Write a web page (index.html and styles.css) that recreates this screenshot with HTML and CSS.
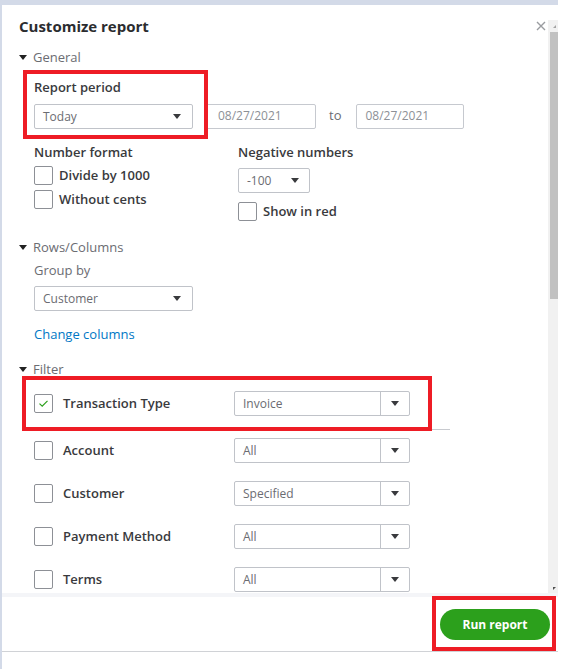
FILE: index.html
```html
<!DOCTYPE html>
<html>
<head>
<meta charset="utf-8">
<link rel="stylesheet" href="styles.css">
</head>
<body>
<div class="screen">
  <div class="dialog">
    <div class="body">
      <div class="content">
        <div class="title-row">
          <h1 class="title">Customize report</h1>
          <svg class="close" width="10" height="10" viewBox="0 0 10 10"><path d="M1 1L9 9M9 1L1 9" stroke="#9a9ca0" stroke-width="1.4"/></svg>
        </div>

        <div class="section-head"><span class="caret"></span>General</div>
        <div class="section">
          <div class="period-row">
            <div class="hl hl-period">
              <div class="label strong">Report period</div>
              <div class="select w159"><span class="val">Today</span><span class="arrow"></span></div>
            </div>
            <div class="date first-date">08/27/2021</div>
            <span class="to">to</span>
            <div class="date">08/27/2021</div>
          </div>

          <div class="format-grid">
            <div class="col">
              <div class="label strong">Number format</div>
              <div class="check first"><span class="box"></span><span class="ctext">Divide by 1000</span></div>
              <div class="check"><span class="box"></span><span class="ctext">Without cents</span></div>
            </div>
            <div class="col">
              <div class="label strong">Negative numbers</div>
              <div class="select w72 neg"><span class="val">-100</span><span class="arrow"></span></div>
              <div class="check red-check"><span class="box"></span><span class="ctext">Show in red</span></div>
            </div>
          </div>
        </div>

        <div class="section-head rows-head"><span class="caret"></span>Rows/Columns</div>
        <div class="section">
          <div class="label light groupby">Group by</div>
          <div class="select w159 grp"><span class="val">Customer</span><span class="arrow"></span></div>
          <div class="link">Change columns</div>
        </div>

        <div class="section-head filter-head"><span class="caret"></span>Filter</div>
        <div class="filter-first">
          <div class="hl hl-filter">
            <div class="frow">
              <span class="box checked"><svg width="11" height="9" viewBox="0 0 11 9"><path d="M1.5 4.6L4.2 7.2L9.5 1.8" fill="none" stroke="#2ca01c" stroke-width="1.2"/></svg></span>
              <span class="flabel">Transaction Type</span>
              <div class="select split"><span class="val">Invoice</span><span class="sep"></span><span class="arrow"></span></div>
            </div>
          </div>
        </div>
        <div class="frows">
          <div class="frow">
            <span class="box"></span>
            <span class="flabel">Account</span>
            <div class="select split"><span class="val">All</span><span class="sep"></span><span class="arrow"></span></div>
          </div>
          <div class="frow">
            <span class="box"></span>
            <span class="flabel">Customer</span>
            <div class="select split"><span class="val">Specified</span><span class="sep"></span><span class="arrow"></span></div>
          </div>
          <div class="frow">
            <span class="box"></span>
            <span class="flabel">Payment Method</span>
            <div class="select split"><span class="val">All</span><span class="sep"></span><span class="arrow"></span></div>
          </div>
          <div class="frow">
            <span class="box"></span>
            <span class="flabel">Terms</span>
            <div class="select split"><span class="val">All</span><span class="sep"></span><span class="arrow"></span></div>
          </div>
        </div>
      </div>
      <div class="scrollbar">
        <span class="sb-up"></span>
        <span class="sb-thumb"></span>
        <span class="sb-fill"></span>
        <span class="sb-down"></span>
      </div>
    </div>
    <div class="band"></div>
    <div class="footer">
      <div class="hl hl-run">
        <button class="run">Run report</button>
      </div>
    </div>
  </div>
</div>
</body>
</html>
```

FILE: styles.css
```css
* { box-sizing: border-box; }
html, body { margin: 0; padding: 0; }
body {
  background: #fff;
  font-family: "Open Sans", "Liberation Sans", sans-serif;
  color: #393a3d;
  width: 566px;
  height: 669px;
  overflow: hidden;
}
.screen {
  width: 558px;
  height: 669px;
  background: #d3dae8;
  padding: 5px 0 0 2px;
}
.dialog {
  width: 556px;
  height: 664px;
  background: #fff;
  display: flex;
  flex-direction: column;
}
.body {
  height: 588px;
  display: flex;
  flex: none;
}
.content {
  flex: 1;
  padding: 11px 2px 0 17px;
  overflow: hidden;
}
.title-row {
  display: flex;
  align-items: center;
  justify-content: space-between;
  height: 20px;
}
.title {
  margin: 0;
  font-size: 15px;
  line-height: 20px;
  font-weight: 700;
  color: #2b2c2f;
}

.section-head {
  margin-top: 12px;
  height: 18px;
  line-height: 18px;
  font-size: 13px;
  color: #6b6c72;
  display: flex;
  align-items: center;
}
.caret {
  width: 0; height: 0;
  border-left: 4.5px solid transparent;
  border-right: 4.5px solid transparent;
  border-top: 5px solid #222;
  margin-right: 6px;
}
.rows-head { margin-top: 17px; }
.filter-head { margin-top: 17px; }

.section { padding-left: 15px; }

.label {
  font-size: 13px;
  line-height: 18px;
  height: 18px;
  white-space: nowrap;
}
.strong { font-weight: 600; color: #393a3d; }
.light { color: #6b6c72; }

.hl { border: 4px solid #ee1c25; position: relative; z-index: 1; }

.period-row {
  display: flex;
  align-items: flex-end;
  margin-top: 4px;
}
.hl-period {
  margin-left: -11px;
  padding: 4px 11px 6px 7px;
}
.hl-period .select { margin-top: 8px; }

.select {
  height: 25px;
  border: 1px solid #c0c3c9;
  border-radius: 2px;
  display: flex;
  align-items: center;
  padding-left: 8px;
  font-size: 12px;
  color: #6b6c72;
  background: #fff;
}
.select .val { flex: 1; white-space: nowrap; }
.arrow {
  width: 0; height: 0;
  border-left: 4px solid transparent;
  border-right: 4px solid transparent;
  border-top: 5px solid #393a3d;
}
.w159 { width: 159px; padding-right: 11px; }
.w72 { width: 72px; padding-right: 10px; }

.date {
  width: 108px;
  height: 25px;
  border: 1px solid #c6c9cf;
  border-radius: 2px;
  font-size: 12px;
  color: #8d9096;
  line-height: 22px;
  padding-left: 8px;
  margin-bottom: 10px;
}
.first-date {
  width: 111px;
  margin-left: -3px;
  padding-left: 12px;
}
.to {
  font-size: 13px;
  color: #6b6c72;
  height: 25px;
  line-height: 23px;
  margin: 0 15px 10px 13px;
}

.format-grid {
  display: grid;
  grid-template-columns: 204px auto;
  margin-top: 4px;
}
.col { display: flex; flex-direction: column; align-items: flex-start; }
.check {
  display: flex;
  align-items: center;
  margin-top: 5px;
  height: 19px;
}
.check.first { margin-top: 5px; }
.neg { margin-top: 7px; }
.red-check { margin-top: 9px; }
.box {
  width: 19px;
  height: 19px;
  border: 1px solid #8d9096;
  border-radius: 2px;
  background: #fff;
  flex: none;
  display: flex;
  align-items: center;
  justify-content: center;
}
.ctext {
  margin-left: 6px;
  font-size: 13px;
  font-weight: 600;
  color: #393a3d;
  white-space: nowrap;
  line-height: 18px;
  margin-top: -2px;
}

.groupby { margin-top: 5px; }
.grp { margin-top: 7px; }
.link {
  margin-top: 14px;
  font-size: 13px;
  line-height: 18px;
  color: #0077c5;
}

.filter-first {
  margin-left: 3px;
  margin-top: -2px;
  width: 428px;
  border-bottom: 1px solid #c8cacf;
}
.hl-filter {
  width: 410px;
  padding: 11px 18px 11px 8px;
  margin-bottom: -2px;
  background: #fff;
}
.frow {
  display: flex;
  align-items: center;
  height: 25px;
}
.flabel {
  width: 171px;
  margin-left: 10px;
  font-size: 13px;
  font-weight: 600;
  color: #393a3d;
  white-space: nowrap;
  margin-top: -2px;
}
.split {
  width: 176px;
  padding-right: 0;
}
.split .sep {
  width: 1px;
  align-self: stretch;
  background: #c0c3c9;
  margin-right: 10px;
}
.split .arrow { margin-right: 10px; }

.frows {
  padding-left: 15px;
  margin-top: 8px;
  display: flex;
  flex-direction: column;
  gap: 18px;
}

.scrollbar {
  width: 10px;
  margin-top: 15px;
  background: #f1f1f1;
  display: flex;
  flex-direction: column;
  align-items: flex-end;
  flex: none;
}
.sb-up {
  margin-top: 5px;
  margin-right: 2px;
  width: 0; height: 0;
  border-left: 3px solid transparent;
  border-bottom: 3px solid #a3a3a3;
}
.sb-thumb {
  margin-top: 4px;
  width: 8px;
  height: 267px;
  background: #c1c1c1;
}
.sb-fill { flex: 1; }
.sb-down {
  margin-bottom: 3px;
  margin-right: 2px;
  width: 0; height: 0;
  border-left: 3px solid transparent;
  border-top: 3px solid #505050;
  transform: scaleX(-1);
}

.band {
  height: 4px;
  background: #f4f5f8;
  flex: none;
}
.footer {
  height: 55px;
  flex: none;
  border-bottom: 1px solid #d0d2d6;
  display: flex;
  justify-content: flex-end;
  align-items: flex-start;
  padding-right: 2px;
}
.hl-run {
  margin-top: -1px;
  width: 124px;
  height: 55px;
  padding: 9px 2px 0 4px;
}
.run {
  width: 110px;
  height: 31px;
  border: none;
  border-radius: 16px;
  background: #2ca01c;
  color: #fff;
  font-family: "Open Sans", "Liberation Sans", sans-serif;
  font-size: 12px;
  font-weight: 700;
  padding: 0;
}
```
